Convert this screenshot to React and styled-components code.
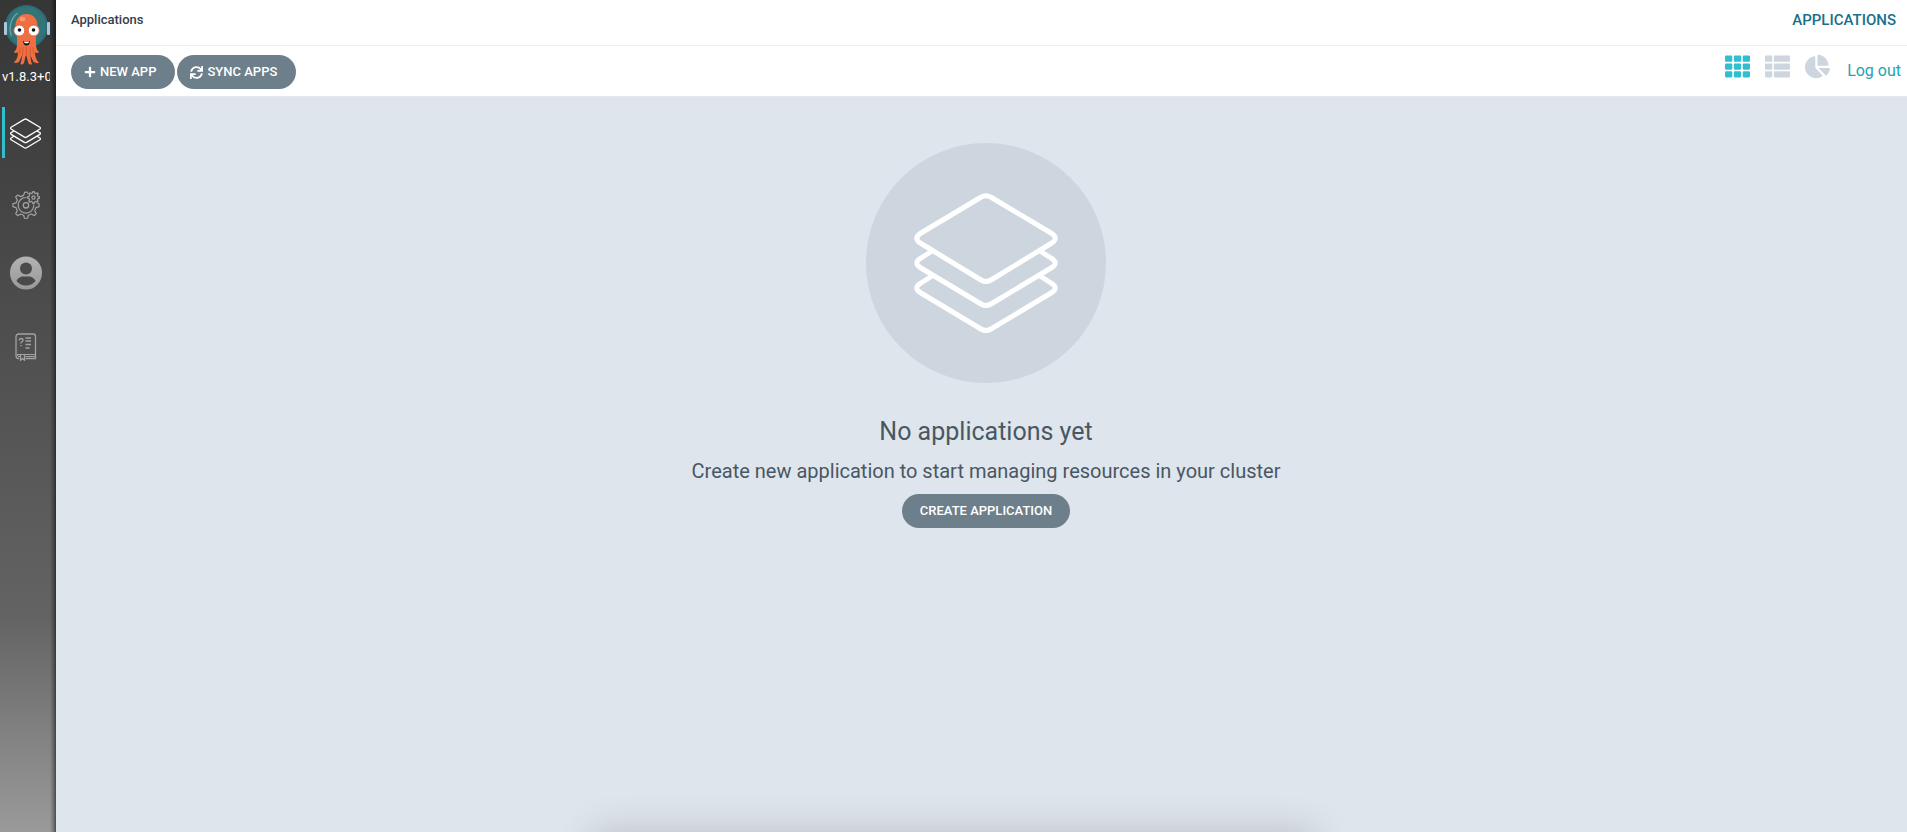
import React from 'react';
import styled, { createGlobalStyle } from 'styled-components';
import { FaPlus, FaSync, FaTh, FaThList, FaChartPie } from 'react-icons/fa';

const GlobalStyle = createGlobalStyle`
  *, *::before, *::after { box-sizing: border-box; }
  body {
    margin: 0;
    font-family: Roboto, "Liberation Sans", sans-serif;
    color: #495763;
    background: #dee5ec;
    overflow: hidden;
  }
  h1, h2, p { margin: 0; font-weight: 400; }
`;

const Layout = styled.div`
  display: grid;
  grid-template-columns: 56px 1fr;
  min-height: 100vh;
`;

const Sidebar = styled.nav`
  display: flex;
  flex-direction: column;
  padding: 4px 6px 0 2px;
  background:
    linear-gradient(to left, rgba(0, 0, 0, 0.5), rgba(0, 0, 0, 0.2) 3px, transparent 6px),
    linear-gradient(to bottom, #363636, #636363 74%, #9a9a9a);
`;

const Logo = styled.svg`
  display: block;
  width: 48px;
  height: 62px;
`;

const Version = styled.a`
  height: 22px;
  overflow: hidden;
  white-space: nowrap;
  color: #fff;
  font-size: 13px;
  line-height: 22px;
  text-decoration: none;
`;

const NavList = styled.ul`
  display: flex;
  flex-direction: column;
  gap: 20px;
  margin: 19px 0 0;
  padding: 0;
  list-style: none;
`;

const NavLink = styled.a`
  display: flex;
  align-items: center;
  justify-content: center;
  height: 51px;
  padding: 2px 4px 0 0;
  border-left: 3px solid ${(p) => (p.$active ? '#30bfd1' : 'transparent')};
  color: ${(p) => (p.$active ? '#fff' : '#a3a3a3')};

  svg { display: block; flex: none; }
`;

const Page = styled.div`
  display: flex;
  flex-direction: column;
`;

const TopBar = styled.header`
  display: flex;
  justify-content: space-between;
  height: 46px;
  padding: 8px 11px 0 15px;
  background: #fff;
  border-bottom: 1px solid #edeff1;
`;

const Breadcrumb = styled.a`
  color: #363c4a;
  font-size: 13px;
  font-weight: 500;
  line-height: 24px;
  text-decoration: none;
`;

const PageTitle = styled.h1`
  color: #18708a;
  font-size: 15px;
  font-weight: 500;
  line-height: 24px;
  text-transform: uppercase;
`;

const Toolbar = styled.div`
  display: flex;
  justify-content: space-between;
  height: 51px;
  padding: 8px 6px 0 15px;
  background: #fff;
  border-bottom: 1px solid #e3e8ed;
`;

const ButtonGroup = styled.div`
  display: flex;
  gap: 2px;
  padding-top: 1px;
`;

const Button = styled.button`
  display: inline-flex;
  align-items: center;
  gap: 4px;
  height: 34px;
  padding: 0 ${(p) => (p.$icon ? '19px 0 13px' : '18px')};
  border: 0;
  border-radius: 17px;
  background: #6d7f8b;
  color: #fff;
  font: 500 13px/34px Roboto, "Liberation Sans", sans-serif;
  text-transform: uppercase;
  cursor: pointer;
`;

const ViewControls = styled.div`
  display: flex;
  align-items: flex-start;
  gap: 15px;
`;

const ViewButton = styled.button`
  display: block;
  padding: 0;
  border: 0;
  background: none;
  color: ${(p) => (p.$active ? '#30bfd1' : '#cdd6de')};
  cursor: pointer;

  svg { display: block; height: 25px; width: auto; }
`;

const LogOut = styled.a`
  padding: 4px 0 0 2px;
  color: #1fa3b5;
  font-size: 16px;
  line-height: 26px;
  text-decoration: none;
`;

const EmptyState = styled.main`
  display: flex;
  flex-direction: column;
  align-items: center;
  padding: 46px 0 0 9px;
`;

const EmptyIcon = styled.div`
  display: flex;
  align-items: center;
  justify-content: center;
  width: 240px;
  height: 240px;
  margin-bottom: 31px;
  border-radius: 50%;
  background: #cdd6de;
  color: #fff;
`;

const EmptyTitle = styled.h2`
  font-size: 25px;
  line-height: 36px;
`;

const EmptyText = styled.p`
  margin: 7px 0 8px;
  font-size: 20px;
  line-height: 29px;
`;

const BottomSheet = styled.div`
  position: fixed;
  top: 100%;
  left: 50%;
  width: 720px;
  height: 60px;
  margin-left: -360px;
  background: #fff;
  box-shadow: 0 0 36px rgba(70, 75, 65, 0.24);
`;

const LayersIcon = ({ size, stroke }) => (
  <svg width={size} height={size} viewBox="0 0 144 144" fill="none" stroke="currentColor" strokeWidth={stroke} strokeLinejoin="round" aria-hidden="true">
    <path d="M66.500 6.500 Q72 3 77.500 6.500 L137 42 Q145.500 47 137 52.500 L77 89 Q72 92 67 89 L7 52.500 Q-1.500 47 7 42 Z" />
    <path d="M18 60 L7 67 Q-1.500 72 7 77 L67 113 Q72 116 77 113 L137 77 Q145.500 72 137 67 L126 60" />
    <path d="M18 85 L7 92 Q-1.500 97 7 102 L67 138 Q72 141 77 138 L137 102 Q145.500 97 137 92 L126 85" />
  </svg>
);

const gearPath = (cx, cy, outer, inner, teeth) => {
  const step = (Math.PI * 2) / teeth;
  const at = (r, a) => `${(cx + r * Math.cos(a)).toFixed(2)} ${(cy + r * Math.sin(a)).toFixed(2)}`;
  const parts = [];
  for (let i = 0; i < teeth; i += 1) {
    const a = i * step - Math.PI / 2;
    parts.push(at(inner, a - step * 0.3), at(outer, a - step * 0.13), at(outer, a + step * 0.13), at(inner, a + step * 0.3));
  }
  return `M${parts.join(' L')} Z`;
};

const GearsIcon = () => (
  <svg width="28" height="28" viewBox="0 0 28 28" fill="none" stroke="currentColor" strokeLinejoin="round" aria-hidden="true">
    <defs>
      <mask id="big-gear">
        <rect width="28" height="28" fill="#fff" />
        <circle cx="21.500" cy="6.500" r="7.300" fill="#000" />
      </mask>
    </defs>
    <g mask="url(#big-gear)">
      <path d={gearPath(14, 14.3, 13.3, 10.2, 8)} strokeWidth="1.200" />
      <circle cx="14" cy="14.300" r="7.800" strokeWidth="1.200" />
    </g>
    <circle cx="14" cy="14.300" r="2.700" strokeWidth="1.300" />
    <path d={gearPath(21.5, 6.5, 6, 4.6, 8)} strokeWidth="1.200" />
    <circle cx="21.500" cy="6.500" r="1.600" strokeWidth="1.200" />
  </svg>
);

const UserIcon = () => (
  <svg width="32" height="40" viewBox="0 0 32 40" aria-hidden="true">
    <defs>
      <linearGradient id="user-fill" x1="0" y1="0" x2="0" y2="1">
        <stop offset="0" stopColor="#b2b2b2" />
        <stop offset="1" stopColor="#999" />
      </linearGradient>
    </defs>
    <ellipse cx="16" cy="17" rx="16" ry="16.500" fill="url(#user-fill)" />
    <circle cx="16" cy="12.500" r="6" fill="#4a4a4a" />
    <path d="M6.500 25 C9 20 13 20.500 16 20.500 C19 20.500 23 20 25.500 25 C20.500 31 11.500 31 6.500 25 Z" fill="#4a4a4a" />
  </svg>
);

const BookIcon = () => (
  <svg width="22" height="28" viewBox="0 0 22 28" fill="none" stroke="currentColor" strokeWidth="1.300" aria-hidden="true">
    <path d="M4 25.500 H3.500 Q1 25.500 1 22.500 V4 Q1 1 4 1 H18 Q20.500 1 20.500 3.500 V25.500 H10.500" />
    <path d="M2 21.500 H20.500 M10.500 23.500 H20 M2 22 Q2.500 24 5 23.500" strokeWidth="1" />
    <path d="M5.500 21.500 V27.200 L7.500 25.500 L9.500 27.200 V21.500" />
    <path d="M4 7.500 Q4.200 5.500 6 5.500 Q8 5.500 8 7.300 Q8 8.500 6 9.500 V10.500 M6 12 V13.200" />
    <path d="M10.500 5 H16 M10.500 8 H16 M10.500 11.500 H16 M10.500 15 H14.500" />
  </svg>
);

const ArgoLogo = () => (
  <Logo viewBox="0 0 48 62" role="img" aria-label="Argo">
    <circle cx="24.500" cy="22.500" r="21.500" fill="#2c6c72" />
    <circle cx="24.500" cy="22.500" r="19.500" fill="#327478" />
    <rect x="2" y="18" width="3" height="13" rx="1" fill="#a9c6dc" />
    <rect x="45" y="18" width="3" height="13" rx="1" fill="#a9c6dc" />
    <path d="M9.500 32 C6.500 24 8.500 15 15.500 9" fill="none" stroke="#6fa3a5" strokeWidth="1.200" />
    <path
      d="M24.500 10 C17 10 13 16 13.500 23 C14.500 31 15.500 34 15 40 C15 46 13 46.500 12 48 Q12.500 49.500 16 48.500 C16 52 15 56 12 58 Q13 60 17 58 L20 51.500 C20 55 19 58 18.500 60 Q20 61.500 22 59 L23.500 52 L24.500 52 L26.500 59.500 Q28.500 61.500 30 60 C29 58 28.500 55 28.500 51.500 L31.500 58 Q35 60 37 58.500 C34 56 33 52 33 48.500 Q36 49.500 37 48 C36 46.500 34 46 34 40 C33.500 34 34.500 31 35.500 23 C36 16 32 10 24.500 10 Z"
      fill="#ef6f43"
    />
    <path d="M18 43 L17.500 50 M21 43 L20.500 52 M24.500 43 L24.500 52 M28 43 L28.500 52 M31 43 L31.500 50" fill="none" stroke="#cf5430" strokeWidth="0.800" />
    <ellipse cx="20.500" cy="15" rx="2.800" ry="2.200" fill="#f49b76" />
    <circle cx="17.300" cy="26.500" r="5.500" fill="#fff" stroke="#e0592c" strokeWidth="0.900" />
    <circle cx="31.700" cy="26.500" r="5.500" fill="#fff" stroke="#e0592c" strokeWidth="0.900" />
    <circle cx="17.500" cy="26" r="1.800" fill="#111" />
    <circle cx="31.500" cy="26" r="1.800" fill="#111" />
    <path d="M21 37 Q24.500 39 28 37 Q27.500 41.500 24.500 41.500 Q21.500 41.500 21 37 Z" fill="#1f1512" />
    <path d="M22 37.500 Q24.500 38.500 27 37.500 L26.500 39 Q24.500 39.500 22.500 39 Z" fill="#fff" />
  </Logo>
);

const navItems = [
  { label: 'Manage applications', icon: <LayersIcon size={31} stroke={6} />, active: true },
  { label: 'Manage repositories and settings', icon: <GearsIcon /> },
  { label: 'User info', icon: <UserIcon /> },
  { label: 'Documentation', icon: <BookIcon /> },
];

const views = [
  { label: 'Tiles', Icon: FaTh, active: true },
  { label: 'List', Icon: FaThList },
  { label: 'Summary', Icon: FaChartPie },
];

export default function App() {
  return (
    <>
      <GlobalStyle />
      <Layout>
        <Sidebar>
          <ArgoLogo />
          <Version href="#version">v1.8.3+0</Version>
          <NavList>
            {navItems.map(({ label, icon, active }) => (
              <li key={label}>
                <NavLink href="#nav" aria-label={label} $active={active}>{icon}</NavLink>
              </li>
            ))}
          </NavList>
        </Sidebar>
        <Page>
          <TopBar>
            <Breadcrumb href="#applications">Applications</Breadcrumb>
            <PageTitle>Applications</PageTitle>
          </TopBar>
          <Toolbar>
            <ButtonGroup>
              <Button type="button" $icon><FaPlus size={12} />New App</Button>
              <Button type="button" $icon><FaSync size={13} />Sync Apps</Button>
            </ButtonGroup>
            <ViewControls>
              {views.map(({ label, Icon, active }) => (
                <ViewButton key={label} type="button" aria-label={label} aria-pressed={!!active} $active={active}>
                  <Icon />
                </ViewButton>
              ))}
              <LogOut href="#logout">Log out</LogOut>
            </ViewControls>
          </Toolbar>
          <EmptyState>
            <EmptyIcon><LayersIcon size={144} stroke={5} /></EmptyIcon>
            <EmptyTitle>No applications yet</EmptyTitle>
            <EmptyText>Create new application to start managing resources in your cluster</EmptyText>
            <Button type="button">Create application</Button>
          </EmptyState>
        </Page>
      </Layout>
      <BottomSheet />
    </>
  );
}
